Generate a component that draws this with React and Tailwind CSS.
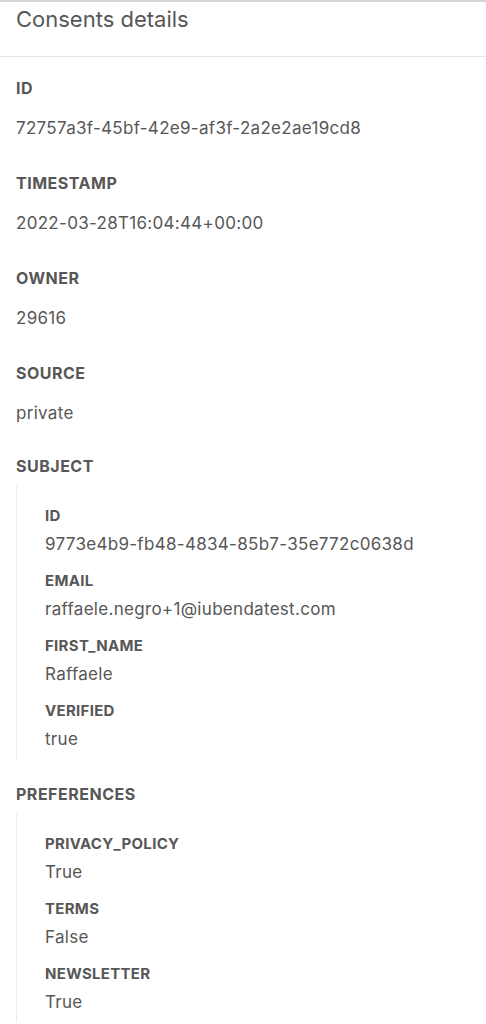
const topFields = [
  { label: 'ID', value: '72757a3f-45bf-42e9-af3f-2a2e2ae19cd8' },
  { label: 'TIMESTAMP', value: '2022-03-28T16:04:44+00:00' },
  { label: 'OWNER', value: '29616' },
  { label: 'SOURCE', value: 'private' },
];

const subject = [
  { label: 'ID', value: '9773e4b9-fb48-4834-85b7-35e772c0638d' },
  { label: 'EMAIL', value: 'raffaele.negro+1@iubendatest.com' },
  { label: 'FIRST_NAME', value: 'Raffaele' },
  { label: 'VERIFIED', value: 'true' },
];

const preferences = [
  { label: 'PRIVACY_POLICY', value: 'True' },
  { label: 'TERMS', value: 'False' },
  { label: 'NEWSLETTER', value: 'True' },
];

const NestedGroup = ({ items }) => (
  <div className="ml-4 mt-[7px] border-l border-[#ececec] pl-[28px] pt-[21px] pb-2">
    {items.map((f, i) => (
      <div key={f.label} className={i > 0 ? 'mt-[15px]' : ''}>
        <div className="text-[15px] font-bold leading-5 tracking-[0.3px]">{f.label}</div>
        <div className="mt-[6px] text-[17px] leading-6 tracking-[0.3px]">{f.value}</div>
      </div>
    ))}
  </div>
);

const App = () => {
  return (
    <div
      className="min-h-screen w-full bg-white text-[#575757] border-t-2 border-[#d4d4d4]"
      style={{ fontFamily: 'Inter, "Noto Sans", sans-serif' }}
    >
      {/* Header */}
      <div className="h-[55px] border-b border-[#e6e6e6] px-4 pt-[3px]">
        <h1 className="text-[22px] leading-7">Consents details</h1>
      </div>

      {/* Top-level fields */}
      <div className="px-4 pt-[19px]">
        {topFields.map((f, i) => (
          <div key={f.label} className={i > 0 ? 'mt-[31px]' : ''}>
            <div className="text-[16px] font-bold leading-6 tracking-[0.5px]">{f.label}</div>
            <div className="mt-[16px] text-[17px] leading-6 tracking-[0.3px]">{f.value}</div>
          </div>
        ))}
      </div>

      <div className="mt-[29px] px-4">
        <div className="text-[16px] font-bold leading-6 tracking-[0.5px]">SUBJECT</div>
      </div>
      <NestedGroup items={subject} />

      <div className="mt-[23px] px-4">
        <div className="text-[16px] font-bold leading-6 tracking-[0.5px]">PREFERENCES</div>
      </div>
      <NestedGroup items={preferences} />
    </div>
  );
};

export default App;
